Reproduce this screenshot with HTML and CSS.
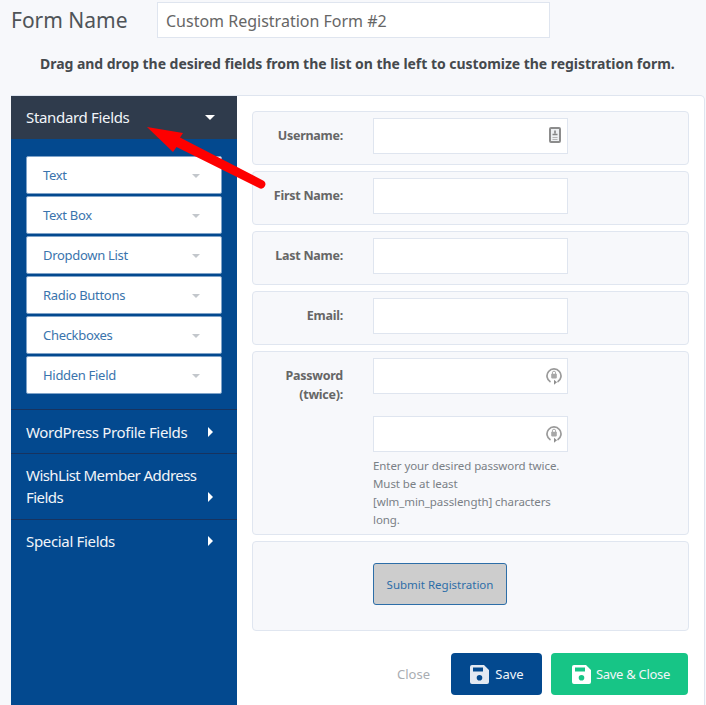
FILE: index.html
```html
<!DOCTYPE html>
<html>
<head>
  <title>Registration Form</title>
  <meta charset="utf-8">
  <link rel="stylesheet" href="styles.css">
</head>
<body>

<div class="name-row">
  <label class="name-label">Form Name</label>
  <div class="name-input">Custom Registration Form #2</div>
</div>

<p class="hint">Drag and drop the desired fields from the list on the left to customize the registration form.</p>

<section class="panel">
  <nav class="side">
    <div class="side-head">Standard Fields <i class="caret-down"></i></div>
    <div class="field-list">
      <div class="field-item">Text <i class="caret-small"></i></div>
      <div class="field-item">Text Box <i class="caret-small"></i></div>
      <div class="field-item">Dropdown List <i class="caret-small"></i></div>
      <div class="field-item">Radio Buttons <i class="caret-small"></i></div>
      <div class="field-item">Checkboxes <i class="caret-small"></i></div>
      <div class="field-item">Hidden Field <i class="caret-small"></i></div>
    </div>
    <div class="side-group">WordPress Profile Fields <i class="caret-right"></i></div>
    <div class="side-group side-group-wide">WishList Member Address Fields <i class="caret-right"></i></div>
    <div class="side-group">Special Fields <i class="caret-right"></i></div>
  </nav>

  <div class="main">
    <div class="row">
      <div class="row-label">Username:</div>
      <div class="row-body">
        <div class="input">
          <svg class="icon-card" width="12" height="16" viewBox="0 0 12 16">
            <rect x="1" y="1" width="10" height="14" rx="1" fill="#eef0f2" stroke="#8c8c8c" stroke-width="2"/>
            <path d="M6 3.500v3M3.500 7.500h5" stroke="#858585" stroke-width="1.600" fill="none"/>
            <path d="M3.500 10.500h5M3.500 12.500h5" stroke="#b5b5b5" stroke-width="1" fill="none"/>
          </svg>
        </div>
      </div>
    </div>
    <div class="row">
      <div class="row-label">First Name:</div>
      <div class="row-body"><div class="input"></div></div>
    </div>
    <div class="row">
      <div class="row-label">Last Name:</div>
      <div class="row-body"><div class="input"></div></div>
    </div>
    <div class="row">
      <div class="row-label">Email:</div>
      <div class="row-body"><div class="input"></div></div>
    </div>
    <div class="row row-password">
      <div class="row-label">Password (twice):</div>
      <div class="row-body">
        <div class="input">
          <svg class="icon-lock" width="16" height="18" viewBox="0 0 16 18">
            <path d="M4.500 15A7 7 0 1 1 11.500 15" fill="none" stroke="#9a9a9a" stroke-width="1.700"/>
            <path d="M8 12.800l3 2.500-3 2.500z" fill="#8f8f8f"/>
            <rect x="5.200" y="6.800" width="5.600" height="4.600" rx="0.800" fill="#a8a8a8"/>
            <path d="M6.400 7V5.800a1.600 1.600 0 0 1 3.200 0V7" fill="none" stroke="#a8a8a8" stroke-width="1"/>
          </svg>
        </div>
        <div class="input input-second">
          <svg class="icon-lock" width="16" height="18" viewBox="0 0 16 18">
            <path d="M4.500 15A7 7 0 1 1 11.500 15" fill="none" stroke="#9a9a9a" stroke-width="1.700"/>
            <path d="M8 12.800l3 2.500-3 2.500z" fill="#8f8f8f"/>
            <rect x="5.200" y="6.800" width="5.600" height="4.600" rx="0.800" fill="#a8a8a8"/>
            <path d="M6.400 7V5.800a1.600 1.600 0 0 1 3.200 0V7" fill="none" stroke="#a8a8a8" stroke-width="1"/>
          </svg>
        </div>
        <p class="help">Enter your desired password twice. Must be at least [wlm_min_passlength] characters long.</p>
      </div>
    </div>
    <div class="row row-submit">
      <div class="row-label"></div>
      <div class="row-body"><div class="submit">Submit Registration</div></div>
    </div>

    <div class="actions">
      <span class="close">Close</span>
      <div class="btn btn-save">
        <svg class="save-icon" width="19" height="19" viewBox="0 0 19 19">
          <path fill-rule="evenodd" d="M2 0h12l5 5v12a2 2 0 0 1-2 2H2a2 2 0 0 1-2-2V2a2 2 0 0 1 2-2zM3 2.500v4h10v-4zM9.500 10a2.800 2.800 0 1 0 0 5.600a2.800 2.800 0 1 0 0-5.600z" fill="#e3e9f2"/>
        </svg>
        Save
      </div>
      <div class="btn btn-close">
        <svg class="save-icon" width="19" height="19" viewBox="0 0 19 19">
          <path fill-rule="evenodd" d="M2 0h12l5 5v12a2 2 0 0 1-2 2H2a2 2 0 0 1-2-2V2a2 2 0 0 1 2-2zM3 2.500v4h10v-4zM9.500 10a2.800 2.800 0 1 0 0 5.600a2.800 2.800 0 1 0 0-5.600z" fill="#ffffff"/>
        </svg>
        Save &amp; Close
      </div>
    </div>
  </div>
</section>

<!-- red arrow drawn over the screenshot -->
<svg class="arrow" width="706" height="705" viewBox="0 0 706 705">
  <path d="M147 127L183 133L180 137.500L264 181A4.400 4.400 0 0 1 260 188.500L176.500 147L173 152Z" fill="#fe0000"/>
</svg>

</body>
</html>
```

FILE: styles.css
```css
* {
  box-sizing: border-box;
}

html, body {
  height: 100%;
}

body {
  margin: 0;
  height: 705px;
  overflow: hidden;
  position: relative;
  padding: 2px 0 0 11px;
  background-color: #f7f8fb;
  font-family: "Noto Sans", Arial, sans-serif;
  color: #555;
}

/* Top row */
.name-row {
  display: flex;
  align-items: center;
  height: 36px;
}

.name-label {
  width: 146px;
  font-size: 21px;
  color: #4f5458;
}

.name-input {
  width: 393px;
  height: 36px;
  padding: 0 8px;
  line-height: 36px;
  font-size: 16px;
  color: #666;
  background: #fff;
  border: 1px solid #dfe5ef;
}

.hint {
  margin: 14px 0 0 29px;
  height: 43px;
  font-size: 14px;
  line-height: 24px;
  font-weight: bold;
  letter-spacing: -0.04px;
  color: #45494d;
  white-space: nowrap;
}

/* Panel */
.panel {
  display: flex;
  height: 620px;
  width: 694px;
  background: #fff;
  border: 1px solid #dfe5ef;
  border-left: 0;
  border-radius: 0 5px 0 0;
}

.side {
  width: 226px;
  background-color: #03498f;
  color: #f2f5f9;
  font-size: 15px;
  letter-spacing: -0.33px;
}

.side-head {
  display: flex;
  justify-content: space-between;
  align-items: center;
  height: 43px;
  padding: 0 22px 2px 15px;
  background-color: #2f3b4c;
}

.caret-down {
  width: 0;
  height: 0;
  margin-top: 2px;
  border-left: 5px solid transparent;
  border-right: 5px solid transparent;
  border-top: 5px solid #fff;
}

.field-list {
  display: flex;
  flex-direction: column;
  gap: 2px;
  padding: 17px 15px 15px;
}

.field-item {
  display: flex;
  justify-content: space-between;
  align-items: center;
  height: 38px;
  padding: 0 21px 0 16px;
  font-size: 13px;
  letter-spacing: -0.3px;
  color: #3a74ad;
  background: #fff;
  border: 1px solid #7fa3c9;
  border-radius: 2px;
}

.caret-small {
  width: 0;
  height: 0;
  margin-top: 2px;
  border-left: 4.500px solid transparent;
  border-right: 4.500px solid transparent;
  border-top: 4.500px solid #c3c7cc;
}

.side-group {
  display: flex;
  justify-content: space-between;
  align-items: center;
  height: 44px;
  padding: 0 24px 0 15px;
  border-top: 1px solid #17335f;
}

.side-group:last-child {
  padding-bottom: 2px;
}

.side-group-wide {
  align-items: flex-end;
  height: 66px;
  padding-top: 11px;
  padding-bottom: 11px;
  line-height: 22px;
  letter-spacing: -0.55px;
}

.side-group-wide .caret-right {
  margin-bottom: 6px;
}

.caret-right {
  flex: none;
  width: 0;
  height: 0;
  border-top: 5px solid transparent;
  border-bottom: 5px solid transparent;
  border-left: 5px solid #fff;
}

/* Main column */
.main {
  display: flex;
  flex-direction: column;
  gap: 6px;
  flex: 1;
  padding: 15px 15px 0;
}

.row {
  display: flex;
  min-height: 54px;
  padding: 6px 0;
  background: #f7f8fb;
  border: 1px solid #e0e6f0;
  border-radius: 4px;
}

.row-password {
  padding-bottom: 5px;
}

.row-label {
  width: 90px;
  margin-top: 8px;
  font-size: 12.500px;
  line-height: 19px;
  font-weight: bold;
  letter-spacing: -0.25px;
  text-align: right;
  color: #666;
}

.row-body {
  width: 195px;
  margin-left: 30px;
}

.input {
  position: relative;
  height: 36px;
  background: #fff;
  border: 1px solid #dfe5ef;
}

.input-second {
  margin-top: 22px;
}

.icon-card {
  position: absolute;
  right: 6px;
  top: 8px;
}

.icon-lock {
  position: absolute;
  right: 5px;
  top: 8px;
}

.help {
  margin: 5px 0 0;
  font-size: 11.500px;
  line-height: 18px;
  letter-spacing: -0.08px;
  color: #7a8086;
}

.row-submit {
  height: 90px;
  padding-top: 21px;
}

.submit {
  width: 134px;
  height: 42px;
  line-height: 41px;
  font-size: 11.500px;
  text-align: center;
  color: #2d6ea8;
  background-color: #cdcdcd;
  border: 1px solid #2d6ea8;
  border-radius: 3px;
}

/* Bottom buttons */
.actions {
  display: flex;
  justify-content: flex-end;
  align-items: center;
  gap: 9px;
  margin: 16px 1px 0 0;
}

.close {
  margin-right: 12px;
  font-size: 13px;
  color: #a9adb2;
}

.btn {
  display: flex;
  align-items: center;
  justify-content: center;
  gap: 6px;
  height: 42px;
  font-size: 13px;
  color: #f2f5f9;
  border-radius: 4px;
}

.btn-save {
  width: 91px;
  padding-left: 1px;
}

.btn-save {
  background-color: #03498f;
}

.btn-close {
  width: 137px;
  gap: 5px;
  padding-left: 3px;
  letter-spacing: -0.3px;
  background-color: #17c586;
}

.arrow {
  position: absolute;
  left: 0;
  top: 0;
  pointer-events: none;
}
```
